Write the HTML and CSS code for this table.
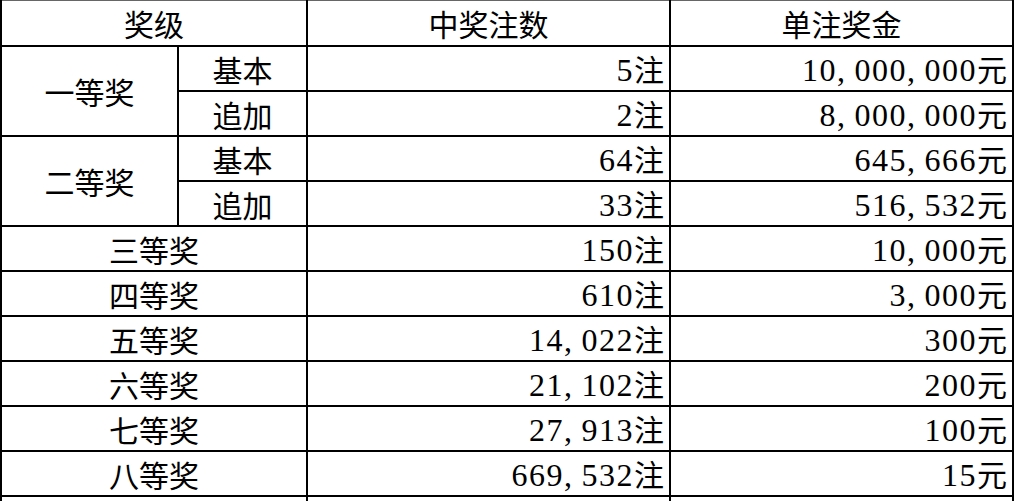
FILE: index.html
```html
<!DOCTYPE html>
<html lang="zh-CN">
<head>
<meta charset="utf-8">
<title>开奖结果</title>
<link rel="stylesheet" href="styles.css">
</head>
<body>
<table class="prize">
  <colgroup>
    <col class="c1"><col class="c2"><col class="c3"><col class="c4">
  </colgroup>
  <thead>
    <tr class="head">
      <th colspan="2">奖级</th>
      <th>中奖注数</th>
      <th>单注奖金</th>
    </tr>
  </thead>
  <tbody>
    <tr>
      <td rowspan="2" class="lvl">一等奖</td>
      <td class="sub">基本</td>
      <td class="num"><span class="d">5</span>注</td>
      <td class="num"><span class="d">10</span><span class="c">,</span><span class="d">000</span><span class="c">,</span><span class="d">000</span>元</td>
    </tr>
    <tr>
      <td class="sub">追加</td>
      <td class="num"><span class="d">2</span>注</td>
      <td class="num"><span class="d">8</span><span class="c">,</span><span class="d">000</span><span class="c">,</span><span class="d">000</span>元</td>
    </tr>
    <tr>
      <td rowspan="2" class="lvl">二等奖</td>
      <td class="sub">基本</td>
      <td class="num"><span class="d">64</span>注</td>
      <td class="num"><span class="d">645</span><span class="c">,</span><span class="d">666</span>元</td>
    </tr>
    <tr>
      <td class="sub">追加</td>
      <td class="num"><span class="d">33</span>注</td>
      <td class="num"><span class="d">516</span><span class="c">,</span><span class="d">532</span>元</td>
    </tr>
    <tr>
      <td colspan="2" class="lvl">三等奖</td>
      <td class="num"><span class="d">150</span>注</td>
      <td class="num"><span class="d">10</span><span class="c">,</span><span class="d">000</span>元</td>
    </tr>
    <tr>
      <td colspan="2" class="lvl">四等奖</td>
      <td class="num"><span class="d">610</span>注</td>
      <td class="num"><span class="d">3</span><span class="c">,</span><span class="d">000</span>元</td>
    </tr>
    <tr>
      <td colspan="2" class="lvl">五等奖</td>
      <td class="num"><span class="d">14</span><span class="c">,</span><span class="d">022</span>注</td>
      <td class="num"><span class="d">300</span>元</td>
    </tr>
    <tr>
      <td colspan="2" class="lvl">六等奖</td>
      <td class="num"><span class="d">21</span><span class="c">,</span><span class="d">102</span>注</td>
      <td class="num"><span class="d">200</span>元</td>
    </tr>
    <tr>
      <td colspan="2" class="lvl">七等奖</td>
      <td class="num"><span class="d">27</span><span class="c">,</span><span class="d">913</span>注</td>
      <td class="num"><span class="d">100</span>元</td>
    </tr>
    <tr>
      <td colspan="2" class="lvl">八等奖</td>
      <td class="num"><span class="d">669</span><span class="c">,</span><span class="d">532</span>注</td>
      <td class="num"><span class="d">15</span>元</td>
    </tr>
    <tr class="tail">
      <td colspan="2"></td>
      <td></td>
      <td></td>
    </tr>
  </tbody>
</table>
</body>
</html>
```

FILE: styles.css
```css
html, body {
  margin: 0;
  padding: 0;
  background: #fff;
}

body {
  overflow: hidden;
  height: 501px;
}

.prize {
  border-collapse: collapse;
  table-layout: fixed;
  width: 1014px;
  font-family: "Noto Sans CJK SC", "Liberation Serif", serif;
  font-size: 30px;
  color: #000;
  border-left: 2px solid #222;
  border-top: 1px solid #666;
}

.c1 { width: 177px; }
.c2 { width: 129px; }
.c3 { width: 363px; }
.c4 { width: 343px; }

.prize th,
.prize td {
  border: 2px solid #000;
  padding: 0 6px;
  height: 43px;
  line-height: 30px;
  font-weight: normal;
  text-align: center;
  vertical-align: middle;
  white-space: nowrap;
  overflow: hidden;
}

.prize .head th {
  height: 44px;
  border-top: 1px solid #666;
}

.prize .num {
  text-align: right;
  padding-right: 5px;
}

.d {
  font-family: "Liberation Serif", serif;
  font-size: 32px;
  letter-spacing: 1.5px;
}

.c {
  font-family: "Liberation Serif", serif;
  font-size: 32px;
  letter-spacing: 9.5px;
}

.tail td {
  height: 43px;
}
```
